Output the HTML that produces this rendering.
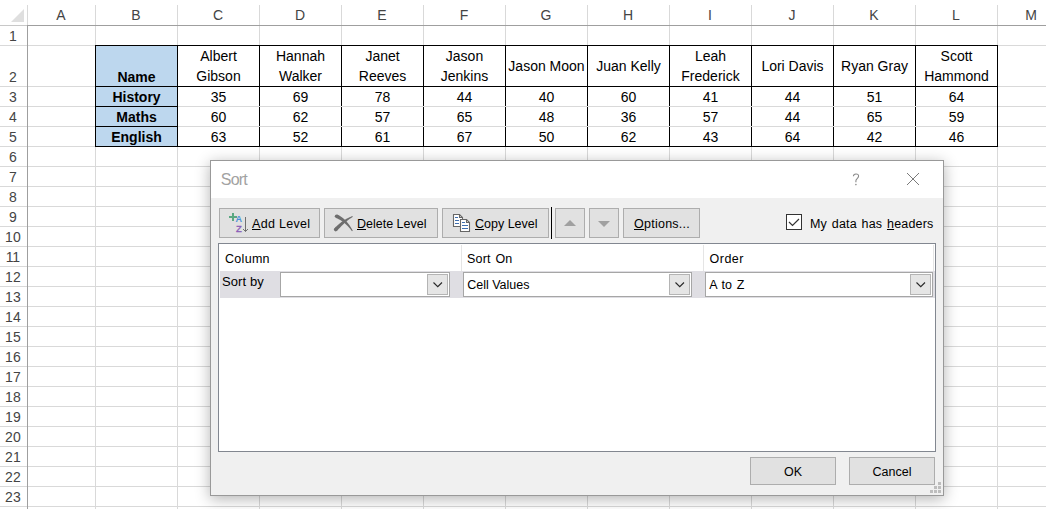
<!DOCTYPE html><html><head><meta charset="utf-8"><style>
*{margin:0;padding:0;box-sizing:border-box}
html,body{width:1046px;height:509px;overflow:hidden;background:#fff;font-family:"Liberation Sans",sans-serif;}
.a{position:absolute}
.t{position:absolute;white-space:nowrap;line-height:20px;height:20px}
.c{text-align:center}
.ui{font-size:12.5px;color:#000}
.btn{position:absolute;background:#e1e1e1;border:1px solid #adadad}
.u{text-decoration:underline;text-underline-offset:1px}
</style></head><body>
<div class="a" style="left:95px;top:5px;width:1px;height:20px;background:#d9d9d9"></div>
<div class="a" style="left:177px;top:5px;width:1px;height:20px;background:#d9d9d9"></div>
<div class="a" style="left:259px;top:5px;width:1px;height:20px;background:#d9d9d9"></div>
<div class="a" style="left:341px;top:5px;width:1px;height:20px;background:#d9d9d9"></div>
<div class="a" style="left:423px;top:5px;width:1px;height:20px;background:#d9d9d9"></div>
<div class="a" style="left:505px;top:5px;width:1px;height:20px;background:#d9d9d9"></div>
<div class="a" style="left:587px;top:5px;width:1px;height:20px;background:#d9d9d9"></div>
<div class="a" style="left:669px;top:5px;width:1px;height:20px;background:#d9d9d9"></div>
<div class="a" style="left:751px;top:5px;width:1px;height:20px;background:#d9d9d9"></div>
<div class="a" style="left:833px;top:5px;width:1px;height:20px;background:#d9d9d9"></div>
<div class="a" style="left:915px;top:5px;width:1px;height:20px;background:#d9d9d9"></div>
<div class="a" style="left:997px;top:5px;width:1px;height:20px;background:#d9d9d9"></div>
<div class="a" style="left:95px;top:25px;width:1px;height:484px;background:#d9d9d9"></div>
<div class="a" style="left:177px;top:25px;width:1px;height:484px;background:#d9d9d9"></div>
<div class="a" style="left:259px;top:25px;width:1px;height:484px;background:#d9d9d9"></div>
<div class="a" style="left:341px;top:25px;width:1px;height:484px;background:#d9d9d9"></div>
<div class="a" style="left:423px;top:25px;width:1px;height:484px;background:#d9d9d9"></div>
<div class="a" style="left:505px;top:25px;width:1px;height:484px;background:#d9d9d9"></div>
<div class="a" style="left:587px;top:25px;width:1px;height:484px;background:#d9d9d9"></div>
<div class="a" style="left:669px;top:25px;width:1px;height:484px;background:#d9d9d9"></div>
<div class="a" style="left:751px;top:25px;width:1px;height:484px;background:#d9d9d9"></div>
<div class="a" style="left:833px;top:25px;width:1px;height:484px;background:#d9d9d9"></div>
<div class="a" style="left:915px;top:25px;width:1px;height:484px;background:#d9d9d9"></div>
<div class="a" style="left:997px;top:25px;width:1px;height:484px;background:#d9d9d9"></div>
<div class="a" style="left:0;top:45px;width:1046px;height:1px;background:#d9d9d9"></div>
<div class="a" style="left:0;top:86px;width:1046px;height:1px;background:#d9d9d9"></div>
<div class="a" style="left:0;top:106px;width:1046px;height:1px;background:#d9d9d9"></div>
<div class="a" style="left:0;top:126px;width:1046px;height:1px;background:#d9d9d9"></div>
<div class="a" style="left:0;top:146px;width:1046px;height:1px;background:#d9d9d9"></div>
<div class="a" style="left:0;top:166px;width:1046px;height:1px;background:#d9d9d9"></div>
<div class="a" style="left:0;top:186px;width:1046px;height:1px;background:#d9d9d9"></div>
<div class="a" style="left:0;top:206px;width:1046px;height:1px;background:#d9d9d9"></div>
<div class="a" style="left:0;top:226px;width:1046px;height:1px;background:#d9d9d9"></div>
<div class="a" style="left:0;top:246px;width:1046px;height:1px;background:#d9d9d9"></div>
<div class="a" style="left:0;top:266px;width:1046px;height:1px;background:#d9d9d9"></div>
<div class="a" style="left:0;top:286px;width:1046px;height:1px;background:#d9d9d9"></div>
<div class="a" style="left:0;top:306px;width:1046px;height:1px;background:#d9d9d9"></div>
<div class="a" style="left:0;top:326px;width:1046px;height:1px;background:#d9d9d9"></div>
<div class="a" style="left:0;top:346px;width:1046px;height:1px;background:#d9d9d9"></div>
<div class="a" style="left:0;top:366px;width:1046px;height:1px;background:#d9d9d9"></div>
<div class="a" style="left:0;top:386px;width:1046px;height:1px;background:#d9d9d9"></div>
<div class="a" style="left:0;top:406px;width:1046px;height:1px;background:#d9d9d9"></div>
<div class="a" style="left:0;top:426px;width:1046px;height:1px;background:#d9d9d9"></div>
<div class="a" style="left:0;top:446px;width:1046px;height:1px;background:#d9d9d9"></div>
<div class="a" style="left:0;top:466px;width:1046px;height:1px;background:#d9d9d9"></div>
<div class="a" style="left:0;top:486px;width:1046px;height:1px;background:#d9d9d9"></div>
<div class="a" style="left:0;top:506px;width:1046px;height:1px;background:#d9d9d9"></div>
<div class="a" style="left:27px;top:5px;width:1px;height:20px;background:#d9d9d9"></div>
<div class="a" style="left:28px;top:25px;width:1018px;height:1px;background:#9f9f9f"></div>
<div class="a" style="left:0;top:25px;width:27px;height:1px;background:#c8c8c8"></div>
<div class="a" style="left:27px;top:25px;width:1px;height:484px;background:#9f9f9f"></div>
<svg class="a" style="left:0;top:0" width="27" height="25"><polygon points="24,9 24,22 11,22" fill="#dfdfdf"/></svg>
<div class="t c" style="left:27px;top:5px;width:68px;font-size:14px;color:#444">A</div>
<div class="t c" style="left:95px;top:5px;width:82px;font-size:14px;color:#444">B</div>
<div class="t c" style="left:177px;top:5px;width:82px;font-size:14px;color:#444">C</div>
<div class="t c" style="left:259px;top:5px;width:82px;font-size:14px;color:#444">D</div>
<div class="t c" style="left:341px;top:5px;width:82px;font-size:14px;color:#444">E</div>
<div class="t c" style="left:423px;top:5px;width:82px;font-size:14px;color:#444">F</div>
<div class="t c" style="left:505px;top:5px;width:82px;font-size:14px;color:#444">G</div>
<div class="t c" style="left:587px;top:5px;width:82px;font-size:14px;color:#444">H</div>
<div class="t c" style="left:669px;top:5px;width:82px;font-size:14px;color:#444">I</div>
<div class="t c" style="left:751px;top:5px;width:82px;font-size:14px;color:#444">J</div>
<div class="t c" style="left:833px;top:5px;width:82px;font-size:14px;color:#444">K</div>
<div class="t c" style="left:915px;top:5px;width:82px;font-size:14px;color:#444">L</div>
<div class="t c" style="left:997px;top:5px;width:68px;font-size:14px;color:#444">M</div>
<div class="t c" style="left:-0.6px;top:26px;width:27px;font-size:14px;color:#444">1</div>
<div class="t c" style="left:-0.6px;top:67px;width:27px;font-size:14px;color:#444">2</div>
<div class="t c" style="left:-0.6px;top:87px;width:27px;font-size:14px;color:#444">3</div>
<div class="t c" style="left:-0.6px;top:107px;width:27px;font-size:14px;color:#444">4</div>
<div class="t c" style="left:-0.6px;top:127px;width:27px;font-size:14px;color:#444">5</div>
<div class="t c" style="left:-0.6px;top:147px;width:27px;font-size:14px;color:#444">6</div>
<div class="t c" style="left:-0.6px;top:167px;width:27px;font-size:14px;color:#444">7</div>
<div class="t c" style="left:-0.6px;top:187px;width:27px;font-size:14px;color:#444">8</div>
<div class="t c" style="left:-0.6px;top:207px;width:27px;font-size:14px;color:#444">9</div>
<div class="t c" style="left:-0.6px;top:227px;width:27px;font-size:14px;color:#444">10</div>
<div class="t c" style="left:-0.6px;top:247px;width:27px;font-size:14px;color:#444">11</div>
<div class="t c" style="left:-0.6px;top:267px;width:27px;font-size:14px;color:#444">12</div>
<div class="t c" style="left:-0.6px;top:287px;width:27px;font-size:14px;color:#444">13</div>
<div class="t c" style="left:-0.6px;top:307px;width:27px;font-size:14px;color:#444">14</div>
<div class="t c" style="left:-0.6px;top:327px;width:27px;font-size:14px;color:#444">15</div>
<div class="t c" style="left:-0.6px;top:347px;width:27px;font-size:14px;color:#444">16</div>
<div class="t c" style="left:-0.6px;top:367px;width:27px;font-size:14px;color:#444">17</div>
<div class="t c" style="left:-0.6px;top:387px;width:27px;font-size:14px;color:#444">18</div>
<div class="t c" style="left:-0.6px;top:407px;width:27px;font-size:14px;color:#444">19</div>
<div class="t c" style="left:-0.6px;top:427px;width:27px;font-size:14px;color:#444">20</div>
<div class="t c" style="left:-0.6px;top:447px;width:27px;font-size:14px;color:#444">21</div>
<div class="t c" style="left:-0.6px;top:467px;width:27px;font-size:14px;color:#444">22</div>
<div class="t c" style="left:-0.6px;top:487px;width:27px;font-size:14px;color:#444">23</div>
<div class="a" style="left:95px;top:45px;width:83px;height:102px;background:#bdd7ee"></div>
<div class="a" style="left:95px;top:45px;width:1px;height:102px;background:#000"></div>
<div class="a" style="left:177px;top:45px;width:1px;height:102px;background:#000"></div>
<div class="a" style="left:259px;top:45px;width:1px;height:102px;background:#000"></div>
<div class="a" style="left:341px;top:45px;width:1px;height:102px;background:#000"></div>
<div class="a" style="left:423px;top:45px;width:1px;height:102px;background:#000"></div>
<div class="a" style="left:505px;top:45px;width:1px;height:102px;background:#000"></div>
<div class="a" style="left:587px;top:45px;width:1px;height:102px;background:#000"></div>
<div class="a" style="left:669px;top:45px;width:1px;height:102px;background:#000"></div>
<div class="a" style="left:751px;top:45px;width:1px;height:102px;background:#000"></div>
<div class="a" style="left:833px;top:45px;width:1px;height:102px;background:#000"></div>
<div class="a" style="left:915px;top:45px;width:1px;height:102px;background:#000"></div>
<div class="a" style="left:997px;top:45px;width:1px;height:102px;background:#000"></div>
<div class="a" style="left:95px;top:45px;width:903px;height:1px;background:#000"></div>
<div class="a" style="left:95px;top:86px;width:903px;height:1px;background:#000"></div>
<div class="a" style="left:95px;top:146px;width:903px;height:1px;background:#000"></div>
<div class="a" style="left:95px;top:106px;width:83px;height:1px;background:#000"></div>
<div class="a" style="left:178px;top:106px;width:819px;height:1px;background:#d9d9d9"></div>
<div class="a" style="left:95px;top:126px;width:83px;height:1px;background:#000"></div>
<div class="a" style="left:178px;top:126px;width:819px;height:1px;background:#d9d9d9"></div>
<div class="t c" style="left:95px;top:67px;width:83px;font-size:14px;color:#000;font-weight:bold">Name</div>
<div class="t c" style="left:95px;top:87px;width:83px;font-size:14px;color:#000;font-weight:bold">History</div>
<div class="t c" style="left:95px;top:107px;width:83px;font-size:14px;color:#000;font-weight:bold">Maths</div>
<div class="t c" style="left:95px;top:127px;width:83px;font-size:14px;color:#000;font-weight:bold">English</div>
<div class="t c" style="left:177px;top:46px;width:83px;font-size:14px;color:#000;">Albert</div>
<div class="t c" style="left:177px;top:66px;width:83px;font-size:14px;color:#000;">Gibson</div>
<div class="t c" style="left:177px;top:87px;width:83px;font-size:14px;color:#000;">35</div>
<div class="t c" style="left:177px;top:107px;width:83px;font-size:14px;color:#000;">60</div>
<div class="t c" style="left:177px;top:127px;width:83px;font-size:14px;color:#000;">63</div>
<div class="t c" style="left:259px;top:46px;width:83px;font-size:14px;color:#000;">Hannah</div>
<div class="t c" style="left:259px;top:66px;width:83px;font-size:14px;color:#000;">Walker</div>
<div class="t c" style="left:259px;top:87px;width:83px;font-size:14px;color:#000;">69</div>
<div class="t c" style="left:259px;top:107px;width:83px;font-size:14px;color:#000;">62</div>
<div class="t c" style="left:259px;top:127px;width:83px;font-size:14px;color:#000;">52</div>
<div class="t c" style="left:341px;top:46px;width:83px;font-size:14px;color:#000;">Janet</div>
<div class="t c" style="left:341px;top:66px;width:83px;font-size:14px;color:#000;">Reeves</div>
<div class="t c" style="left:341px;top:87px;width:83px;font-size:14px;color:#000;">78</div>
<div class="t c" style="left:341px;top:107px;width:83px;font-size:14px;color:#000;">57</div>
<div class="t c" style="left:341px;top:127px;width:83px;font-size:14px;color:#000;">61</div>
<div class="t c" style="left:423px;top:46px;width:83px;font-size:14px;color:#000;">Jason</div>
<div class="t c" style="left:423px;top:66px;width:83px;font-size:14px;color:#000;">Jenkins</div>
<div class="t c" style="left:423px;top:87px;width:83px;font-size:14px;color:#000;">44</div>
<div class="t c" style="left:423px;top:107px;width:83px;font-size:14px;color:#000;">65</div>
<div class="t c" style="left:423px;top:127px;width:83px;font-size:14px;color:#000;">67</div>
<div class="t c" style="left:505px;top:56px;width:83px;font-size:14px;color:#000;">Jason Moon</div>
<div class="t c" style="left:505px;top:87px;width:83px;font-size:14px;color:#000;">40</div>
<div class="t c" style="left:505px;top:107px;width:83px;font-size:14px;color:#000;">48</div>
<div class="t c" style="left:505px;top:127px;width:83px;font-size:14px;color:#000;">50</div>
<div class="t c" style="left:587px;top:56px;width:83px;font-size:14px;color:#000;">Juan Kelly</div>
<div class="t c" style="left:587px;top:87px;width:83px;font-size:14px;color:#000;">60</div>
<div class="t c" style="left:587px;top:107px;width:83px;font-size:14px;color:#000;">36</div>
<div class="t c" style="left:587px;top:127px;width:83px;font-size:14px;color:#000;">62</div>
<div class="t c" style="left:669px;top:46px;width:83px;font-size:14px;color:#000;">Leah</div>
<div class="t c" style="left:669px;top:66px;width:83px;font-size:14px;color:#000;">Frederick</div>
<div class="t c" style="left:669px;top:87px;width:83px;font-size:14px;color:#000;">41</div>
<div class="t c" style="left:669px;top:107px;width:83px;font-size:14px;color:#000;">57</div>
<div class="t c" style="left:669px;top:127px;width:83px;font-size:14px;color:#000;">43</div>
<div class="t c" style="left:751px;top:56px;width:83px;font-size:14px;color:#000;">Lori Davis</div>
<div class="t c" style="left:751px;top:87px;width:83px;font-size:14px;color:#000;">44</div>
<div class="t c" style="left:751px;top:107px;width:83px;font-size:14px;color:#000;">44</div>
<div class="t c" style="left:751px;top:127px;width:83px;font-size:14px;color:#000;">64</div>
<div class="t c" style="left:833px;top:56px;width:83px;font-size:14px;color:#000;">Ryan Gray</div>
<div class="t c" style="left:833px;top:87px;width:83px;font-size:14px;color:#000;">51</div>
<div class="t c" style="left:833px;top:107px;width:83px;font-size:14px;color:#000;">65</div>
<div class="t c" style="left:833px;top:127px;width:83px;font-size:14px;color:#000;">42</div>
<div class="t c" style="left:915px;top:46px;width:83px;font-size:14px;color:#000;">Scott</div>
<div class="t c" style="left:915px;top:66px;width:83px;font-size:14px;color:#000;">Hammond</div>
<div class="t c" style="left:915px;top:87px;width:83px;font-size:14px;color:#000;">64</div>
<div class="t c" style="left:915px;top:107px;width:83px;font-size:14px;color:#000;">59</div>
<div class="t c" style="left:915px;top:127px;width:83px;font-size:14px;color:#000;">46</div>
<div class="a" style="left:210px;top:160px;width:734px;height:336px;border:1px solid #999;background:#f0f0f0;box-shadow:0 3px 14px rgba(0,0,0,0.3)"></div>
<div class="a" style="left:211px;top:161px;width:732px;height:37px;background:#fff"></div>
<div class="t" style="left:220.8px;top:170px;font-size:16px;letter-spacing:-0.8px;color:#a2a2a2">Sort</div>
<svg class="a" style="left:851px;top:171px" width="10" height="16"><path d="M2.4 5.2C2.4 2.4 7.6 2 7.6 5.1C7.6 7.5 4.9 7.7 4.9 9.8V11.2" stroke="#8a8a8a" stroke-width="1.1" fill="none"/><circle cx="4.9" cy="13.6" r="0.8" fill="#8a8a8a"/></svg>
<svg class="a" style="left:906px;top:172px" width="14" height="14"><path d="M1 1L13 13M13 1L1 13" stroke="#7a7a7a" stroke-width="1"/></svg>
<div class="btn" style="left:219px;top:208px;width:101px;height:30px"></div>
<div class="t ui" style="left:252px;top:214px;letter-spacing:0.3px"><span class="u">A</span>dd Level</div>
<div class="btn" style="left:324px;top:208px;width:114px;height:30px"></div>
<div class="t ui" style="left:357px;top:214px"><span class="u">D</span>elete Level</div>
<div class="btn" style="left:442px;top:208px;width:107px;height:30px"></div>
<div class="t ui" style="left:475px;top:214px"><span class="u">C</span>opy Level</div>
<div class="a" style="left:551px;top:207px;width:1px;height:32px;background:#000"></div>
<div class="btn" style="left:555px;top:208px;width:30px;height:30px"></div>
<svg class="a" style="left:563px;top:219px" width="14" height="8"><polygon points="1,7 7,1 13,7" fill="#a0a0a0"/></svg>
<div class="btn" style="left:589px;top:208px;width:30px;height:30px"></div>
<svg class="a" style="left:597px;top:220px" width="14" height="8"><polygon points="1,1 13,1 7,7" fill="#a0a0a0"/></svg>
<div class="btn" style="left:623px;top:208px;width:77px;height:30px"></div>
<div class="t ui" style="left:634px;top:214px;letter-spacing:0.25px"><span class="u">O</span>ptions...</div>
<svg class="a" style="left:228px;top:212px" width="22" height="22">
<path d="M5 1V9M1 5H9" stroke="#5aa882" stroke-width="2"/>
<text x="7.6" y="10.3" font-family="Liberation Sans" font-size="9" font-weight="bold" fill="#4a90d9">A</text>
<text x="7.9" y="20" font-family="Liberation Sans" font-size="9.5" fill="#8a5cb8" stroke="#8a5cb8" stroke-width="0.3">Z</text>
<path d="M17.5 5V19.5M15 17L17.5 19.5L20 17" stroke="#707070" stroke-width="1" fill="none"/>
</svg>
<svg class="a" style="left:330px;top:210px" width="28" height="26"><path d="M5.89 7.86 L6.58 8.15 L7.27 8.46 L7.96 8.79 L8.65 9.14 L9.34 9.51 L10.02 9.91 L10.70 10.32 L11.38 10.76 L12.06 11.23 L12.74 11.72 L13.42 12.23 L14.10 12.77 L14.77 13.33 L15.44 13.92 L16.11 14.53 L16.78 15.17 L17.44 15.84 L18.11 16.53 L18.77 17.25 L19.42 17.99 L20.08 18.76 L20.73 19.56 L21.37 20.39 L22.02 21.24 L22.78 20.76 L22.27 19.80 L21.74 18.87 L21.21 17.96 L20.67 17.07 L20.11 16.21 L19.54 15.37 L18.97 14.56 L18.38 13.76 L17.78 12.99 L17.16 12.25 L16.54 11.53 L15.90 10.83 L15.26 10.16 L14.60 9.52 L13.92 8.90 L13.24 8.30 L12.54 7.73 L11.83 7.19 L11.11 6.68 L10.37 6.19 L9.62 5.73 L8.86 5.30 L8.09 4.91 L7.31 4.54Z" fill="#6e6e6e"/><circle cx="6.6" cy="6.2" r="1.8" fill="#6e6e6e"/><path d="M7.02 20.82 L7.71 20.07 L8.38 19.33 L9.06 18.61 L9.73 17.90 L10.39 17.21 L11.05 16.53 L11.71 15.86 L12.37 15.21 L13.03 14.58 L13.68 13.96 L14.33 13.36 L14.99 12.77 L15.64 12.20 L16.29 11.64 L16.93 11.10 L17.58 10.57 L18.23 10.06 L18.88 9.57 L19.53 9.08 L20.18 8.62 L20.83 8.17 L21.48 7.73 L22.13 7.31 L22.79 6.91 L22.41 6.09 L21.66 6.36 L20.92 6.64 L20.17 6.95 L19.42 7.28 L18.66 7.63 L17.91 8.00 L17.15 8.39 L16.39 8.80 L15.64 9.24 L14.88 9.70 L14.12 10.18 L13.36 10.68 L12.61 11.20 L11.85 11.75 L11.09 12.31 L10.34 12.90 L9.59 13.51 L8.83 14.14 L8.08 14.79 L7.33 15.46 L6.59 16.16 L5.85 16.87 L5.11 17.61 L4.38 18.38Z" fill="#6e6e6e"/><circle cx="5.7" cy="19.6" r="1.8" fill="#6e6e6e"/></svg>
<svg class="a" style="left:448px;top:210px" width="26" height="26">
<path d="M5.5 4.5H11.5L14.5 7.5V16.5H5.5Z" fill="#fff" stroke="#666" stroke-width="1.1"/>
<path d="M11.5 4.5V7.5H14.5" fill="none" stroke="#666" stroke-width="1.1"/>
<path d="M7 7.5H10M7 10.5H11M7 13.5H11" stroke="#3f6fb0" stroke-width="1"/>
<path d="M12.5 9.5H18.5L21.5 12.5V21.5H12.5Z" fill="#fff" stroke="#666" stroke-width="1.1"/>
<path d="M18.5 9.5V12.5H21.5" fill="none" stroke="#666" stroke-width="1.1"/>
<path d="M14 12.5H17M14 15.5H20M14 18.5H20" stroke="#3f6fb0" stroke-width="1"/>
</svg>
<div class="a" style="left:786px;top:214px;width:16px;height:16px;border:1px solid #333;background:#fff"></div>
<svg class="a" style="left:786px;top:214px" width="16" height="16"><path d="M3 8L6.5 11.5L13 5" stroke="#333" stroke-width="1.2" fill="none"/></svg>
<div class="t ui" style="left:810px;top:214px;letter-spacing:0.2px;word-spacing:1px">My data has <span class="u">h</span>eaders</div>
<div class="a" style="left:218px;top:243px;width:718px;height:209px;border:1px solid #828790;background:#fff"></div>
<div class="t ui" style="left:225px;top:249px;letter-spacing:0.3px">Column</div>
<div class="t ui" style="left:467px;top:249px;letter-spacing:0.2px;word-spacing:1px">Sort On</div>
<div class="t ui" style="left:709.5px;top:249px;letter-spacing:0.5px">Order</div>
<div class="a" style="left:461px;top:245px;width:1px;height:26px;background:#e5e5e5"></div>
<div class="a" style="left:703px;top:245px;width:1px;height:26px;background:#e5e5e5"></div>
<div class="a" style="left:933px;top:245px;width:1px;height:26px;background:#e5e5e5"></div>
<div class="a" style="left:220px;top:271px;width:715px;height:27px;background:#dfdee3"></div>
<div class="t ui" style="left:222px;top:272px;font-size:13px;letter-spacing:0.1px">Sort by</div>
<div class="a" style="left:280px;top:272px;width:170px;height:25px;border:1px solid #a6a6a6;background:#fff"></div>
<div class="a" style="left:427px;top:274px;width:21px;height:21px;border:1px solid #b4b4b4;background:#e5e5e5"></div>
<svg class="a" style="left:433px;top:282px" width="10" height="7"><path d="M0.5 0.5L4.75 4.75L9 0.5" stroke="#2a2a2a" stroke-width="1.15" fill="none"/></svg>
<div class="a" style="left:463px;top:272px;width:229px;height:25px;border:1px solid #a6a6a6;background:#fff"></div>
<div class="a" style="left:669px;top:274px;width:21px;height:21px;border:1px solid #b4b4b4;background:#e5e5e5"></div>
<svg class="a" style="left:675px;top:282px" width="10" height="7"><path d="M0.5 0.5L4.75 4.75L9 0.5" stroke="#2a2a2a" stroke-width="1.15" fill="none"/></svg>
<div class="t ui" style="left:467.2px;top:275px;">Cell Values</div>
<div class="a" style="left:705px;top:272px;width:228px;height:25px;border:1px solid #a6a6a6;background:#fff"></div>
<div class="a" style="left:910px;top:274px;width:21px;height:21px;border:1px solid #b4b4b4;background:#e5e5e5"></div>
<svg class="a" style="left:916px;top:282px" width="10" height="7"><path d="M0.5 0.5L4.75 4.75L9 0.5" stroke="#2a2a2a" stroke-width="1.15" fill="none"/></svg>
<div class="t ui" style="left:709.2px;top:275px;word-spacing:1px;letter-spacing:0.1px">A to Z</div>
<div class="btn" style="left:750px;top:457px;width:86px;height:28px"></div>
<div class="t ui c" style="left:750px;width:86px;top:462px">OK</div>
<div class="btn" style="left:849px;top:457px;width:86px;height:28px"></div>
<div class="t ui c" style="left:849px;width:86px;top:462px">Cancel</div>
<svg class="a" style="left:930px;top:482px" width="12" height="12"><rect x="8" y="0" width="3" height="3" fill="#bdbdbd"/><rect x="4" y="4" width="3" height="3" fill="#bdbdbd"/><rect x="8" y="4" width="3" height="3" fill="#bdbdbd"/><rect x="0" y="8" width="3" height="3" fill="#bdbdbd"/><rect x="4" y="8" width="3" height="3" fill="#bdbdbd"/><rect x="8" y="8" width="3" height="3" fill="#bdbdbd"/></svg>
</body></html>
